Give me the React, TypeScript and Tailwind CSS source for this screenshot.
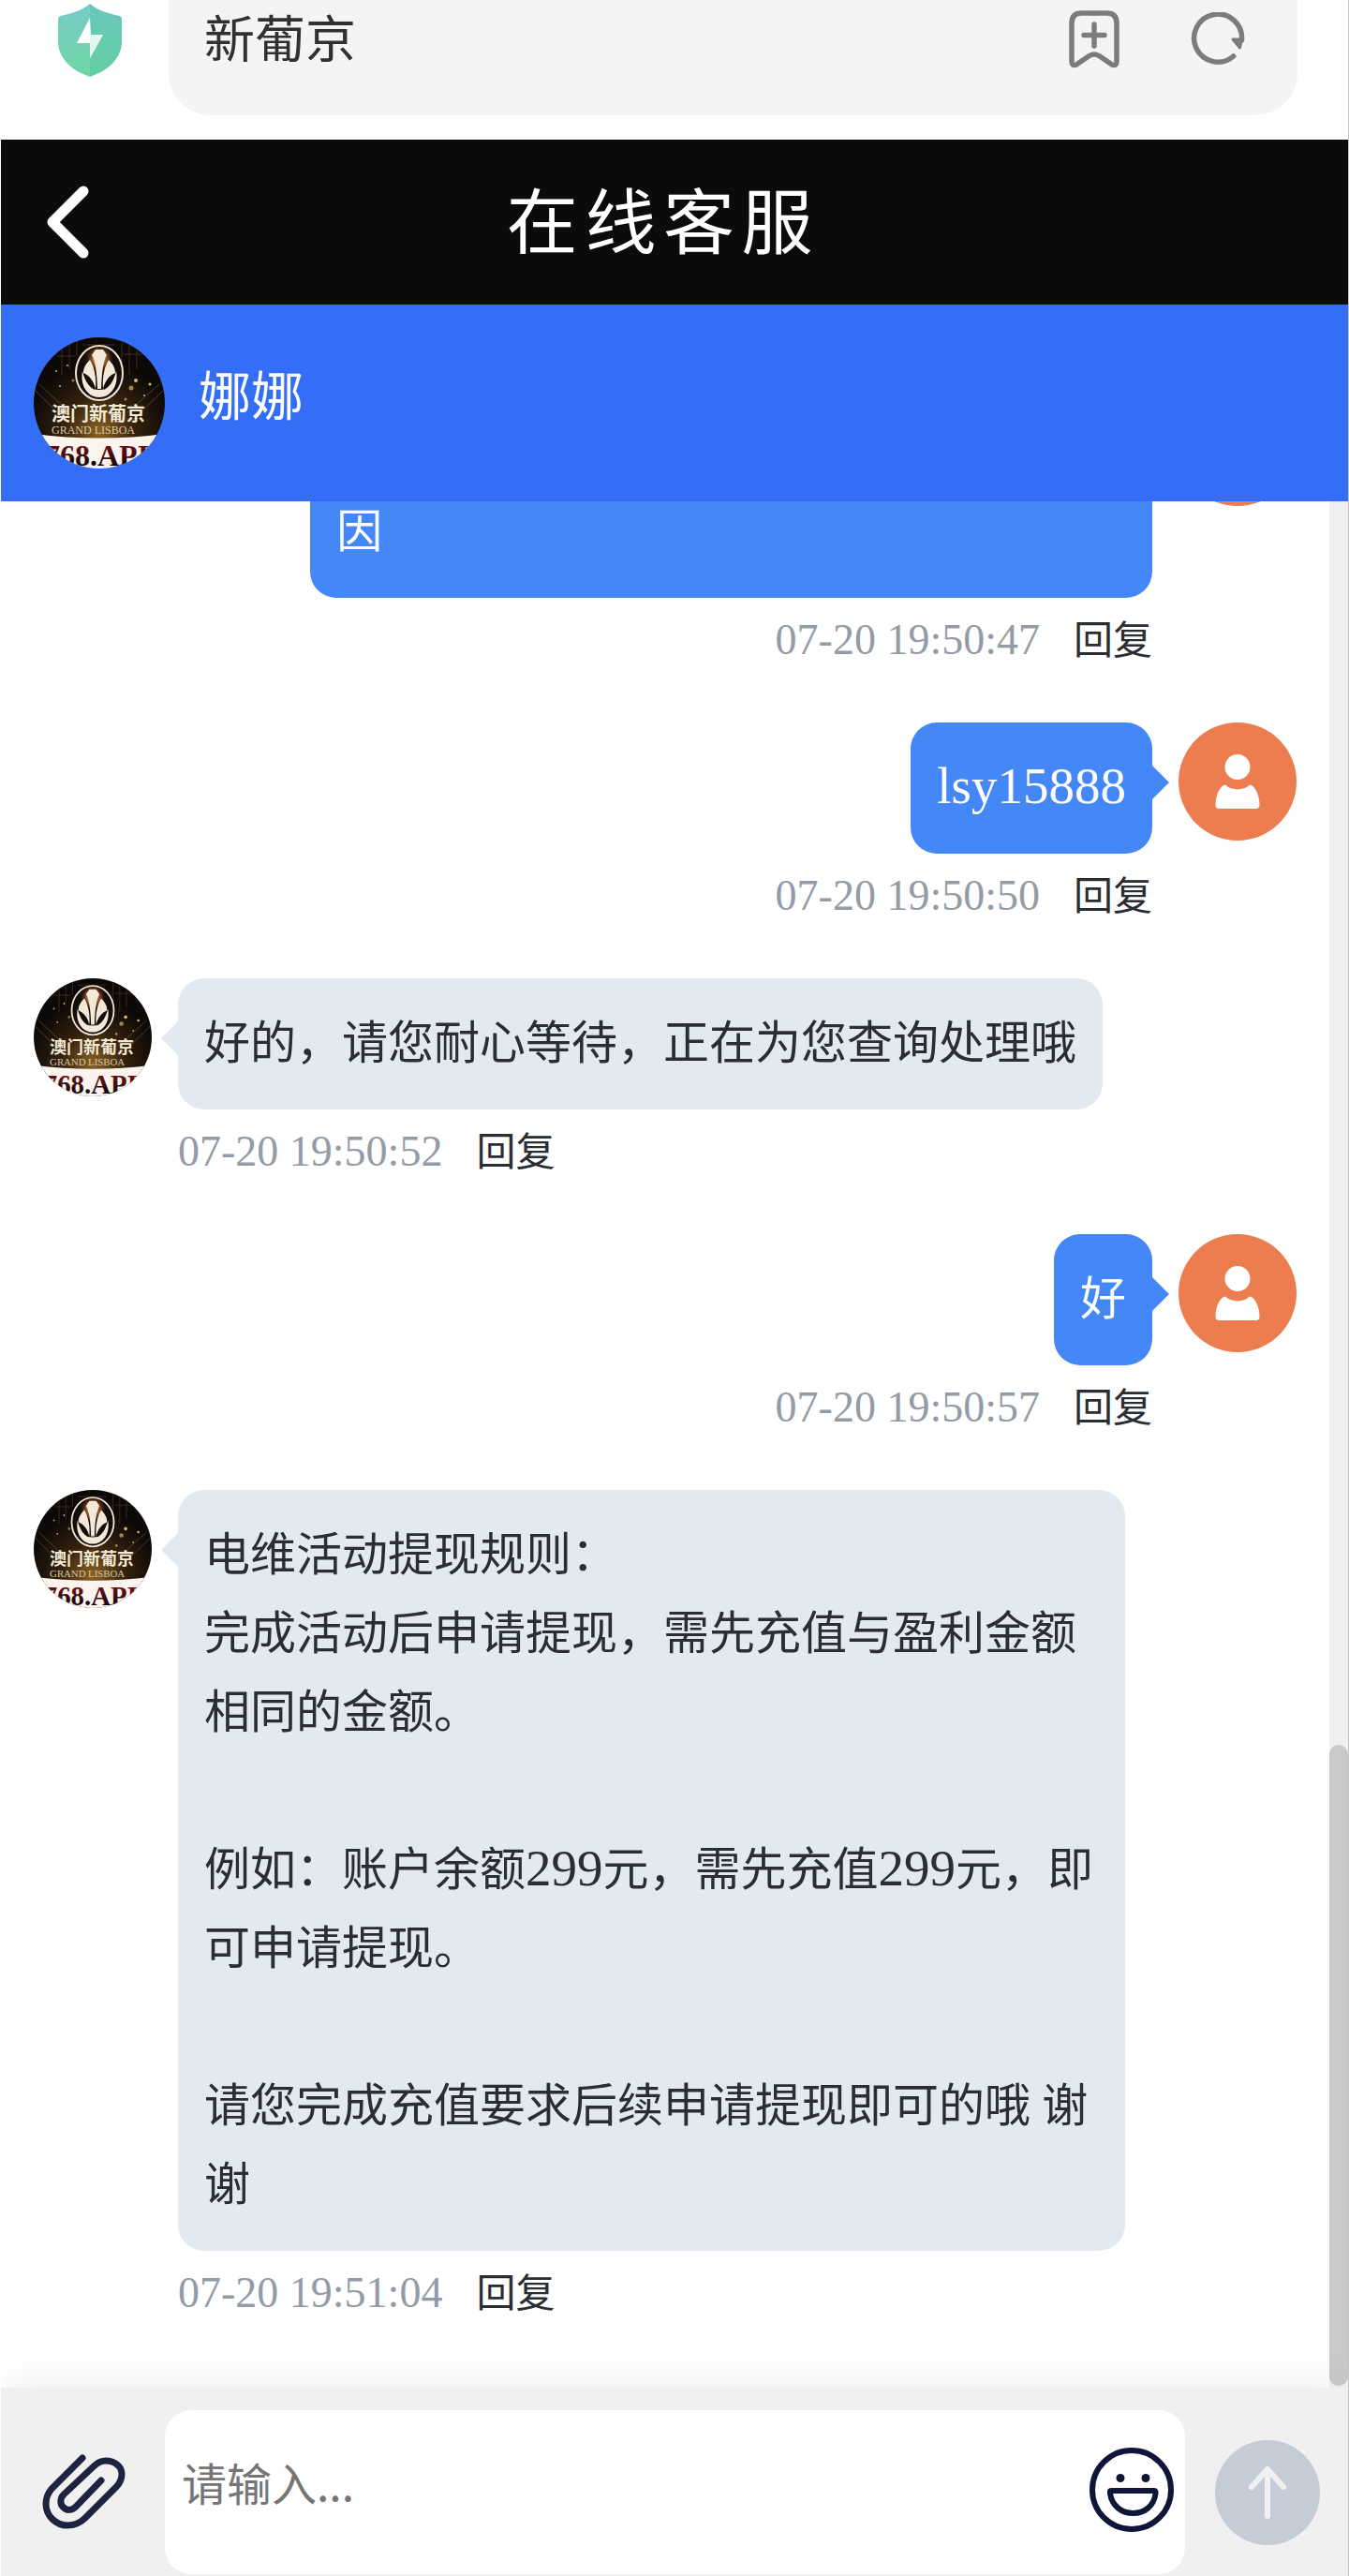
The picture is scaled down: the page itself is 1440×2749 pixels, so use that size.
interface Message {
  id: number;
  from: "agent" | "user";
  text: string;
  time: string;
  wide?: boolean;
}

const messages: Message[] = [
  { id: 1, from: "user", text: "\n因", time: "07-20 19:50:47", wide: true },
  { id: 2, from: "user", text: "lsy15888", time: "07-20 19:50:50" },
  { id: 3, from: "agent", text: "好的，请您耐心等待，正在为您查询处理哦", time: "07-20 19:50:52" },
  { id: 4, from: "user", text: "好", time: "07-20 19:50:57" },
  {
    id: 5,
    from: "agent",
    text: "电维活动提现规则：\n完成活动后申请提现，需先充值与盈利金额相同的金额。\n\n例如：账户余额299元，需先充值299元，即可申请提现。\n\n请您完成充值要求后续申请提现即可的哦 谢谢",
    time: "07-20 19:51:04",
  },
];

function ShieldIcon() {
  return (
    <svg viewBox="0 0 68 78" className="h-[78px] w-[68px]">
      <defs>
        <linearGradient id="shield" x1="0" y1="0" x2="0" y2="1">
          <stop offset="0" stopColor="#78cbc8" />
          <stop offset="1" stopColor="#6fd6a4" />
        </linearGradient>
      </defs>
      <path
        d="M34 0C42 7 55 11 66 13Q68 14 68 17V40C68 58 54 71 34 78C14 71 0 58 0 40V17Q0 14 2 13C13 11 26 7 34 0Z"
        fill="url(#shield)"
      />
      <path d="M34 0C42 7 55 11 66 13Q68 14 68 17V40C68 58 54 71 34 78Z" fill="#3bb894" opacity=".22" />
      <path d="M34 15L20 42H34V58L48 33H35Z" fill="#fff" />
      <path d="M34 42V58L48 33H35Z" fill="#e4f6f0" />
    </svg>
  );
}

function BookmarkIcon() {
  return (
    <svg viewBox="0 0 54 62" className="h-[62px] w-[54px]" fill="none" stroke="#7c7c7c" strokeWidth="5.5" strokeLinecap="round" strokeLinejoin="round">
      <path d="M3 14Q3 3 13 3H41Q51 3 51 14V54Q51 60 46 58L33 49Q27 45 21 49L8 58Q3 60 3 54Z" />
      <path d="M27 15V38M16 26.500H38" />
    </svg>
  );
}

function RefreshIcon() {
  return (
    <svg viewBox="0 0 58 58" className="h-[58px] w-[58px]" fill="none" stroke="#7c7c7c" strokeWidth="5.500" strokeLinecap="round" strokeLinejoin="round">
      <path d="M45.700 47A25.500 25.500 0 1 1 54.500 30" />
      <path d="M45 29H54.500L52.500 38Z" fill="#7c7c7c" strokeWidth="3" />
    </svg>
  );
}

function AgentAvatar({ className }: { className: string }) {
  return (
    <svg viewBox="0 0 140 140" className={`shrink-0 rounded-full ${className}`} role="img" aria-label="澳门新葡京">
      <defs>
        <radialGradient id="glow" cx=".5" cy=".72" r=".55">
          <stop offset="0" stopColor="#8a6224" />
          <stop offset=".5" stopColor="#34210d" />
          <stop offset="1" stopColor="#0d0908" />
        </radialGradient>
        <linearGradient id="plate" x1="0" y1="0" x2="0" y2="1">
          <stop offset="0.3" stopColor="#5d1014" />
          <stop offset="0.8" stopColor="#120808" />
        </linearGradient>
        <radialGradient id="spark">
          <stop offset="0" stopColor="#fff" />
          <stop offset=".4" stopColor="#e08a4c" stopOpacity=".8" />
          <stop offset="1" stopColor="#8a3c14" stopOpacity="0" />
        </radialGradient>
      </defs>
      <rect width="140" height="140" fill="url(#glow)" />
      <g stroke="#5b3a26" strokeWidth="1" opacity=".7">
        <path d="M30 8V40M38 4V34M46 3V20M94 5V28M102 8V40M110 14V34M24 20H44M96 18H120M52 8H86" />
      </g>
      <g stroke="#a88a5c" strokeWidth=".8" opacity=".5">
        <path d="M0 55L30 85M6 50L38 80M140 55L106 88M134 50L100 80" />
      </g>
      <g fill="#d9b765">
        <circle cx="109" cy="46" r="2" />
        <circle cx="104" cy="54" r="2.500" opacity=".7" />
        <circle cx="124" cy="50" r="1.500" />
        <circle cx="28" cy="52" r="1" />
        <circle cx="36" cy="30" r="1" />
        <circle cx="24" cy="36" r="1" />
        <circle cx="118" cy="62" r="1" />
        <circle cx="98" cy="66" r="1.500" opacity=".7" />
        <circle cx="42" cy="46" r="1.500" opacity=".6" />
      </g>
      <ellipse cx="70" cy="38" rx="25" ry="29" fill="#140d0a" stroke="#efe5d5" strokeWidth="2" />
      <circle cx="70" cy="23" r="15" fill="url(#spark)" />
      <g fill="#f4e9d8">
        <path d="M66 13H74L78 19Q73 26 72 55H68Q67 26 62 19Z" />
        <path d="M60 24C65 32 67 44 66 55C64 47 60 41 53 38C53 32 56 28 60 24Z" />
        <path d="M80 24C75 32 73 44 74 55C76 47 80 41 87 38C87 32 84 28 80 24Z" />
        <path d="M52 36C55 48 60 56 70 56C80 56 85 48 88 36C91 52 82 64 70 64C58 64 49 52 52 36Z" />
      </g>
      <path d="M57 42Q64 46 65 56Q58 53 57 42ZM83 42Q76 46 75 56Q82 53 83 42Z" fill="#140d0a" />
      <text x="19" y="89" fontSize="20" fontWeight="700" fill="#f3ead6" fontFamily="'Noto Sans CJK SC', sans-serif">
        澳门新葡京
      </text>
      <text x="19" y="103" fontSize="12" fill="#d8c8a8" fontFamily="'Liberation Serif', serif">
        GRAND LISBOA
      </text>
      <path d="M0 103Q70 112 140 103V140H0Z" fill="#fbf4ee" />
      <text x="12" y="137" fontSize="32" fontWeight="700" fill="url(#plate)" fontFamily="'Liberation Serif', serif">
        768.API
      </text>
    </svg>
  );
}

function UserAvatar() {
  return (
    <svg viewBox="0 0 126 126" className="size-[126px] shrink-0" role="img" aria-label="user">
      <circle cx="63" cy="63" r="63" fill="#eb7d4f" />
      <circle cx="63" cy="47.500" r="13.500" fill="#fff" />
      <path
        d="M50 66.500C46 66.500 39.500 75 39.500 88Q39.500 92 43.500 92H82.500Q86.500 92 86.500 88C86.500 75 80 66.500 76 66.500C69 73 57 73 50 66.500Z"
        fill="#fff"
      />
    </svg>
  );
}

// digits are set a little larger than the surrounding characters
function BubbleText({ text }: { text: string }) {
  return (
    <>
      {text.split(/([A-Za-z0-9]+)/).map((part, i) =>
        i % 2 === 1 ? (
          <span key={i} className="text-[55px] leading-none">
            {part}
          </span>
        ) : (
          part
        )
      )}
    </>
  );
}

function MessageRow({ message }: { message: Message }) {
  const isUser = message.from === "user";

  return (
    <li className={`flex shrink-0 items-start gap-7 ${isUser ? "flex-row-reverse" : ""}`}>
      {isUser ? <UserAvatar /> : <AgentAvatar className="size-[126px]" />}
      <div className={`flex flex-col ${isUser ? "items-end" : "items-start"} ${message.wide ? "w-2/3" : "max-w-3/4"}`}>
        <div
          className={`relative rounded-[28px] p-7 text-[49px] leading-[84px] whitespace-pre-wrap ${
            isUser ? "bg-[#4487f7] text-white" : "bg-[#e3e9f1] text-[#2a2d32]"
          } ${message.wide ? "w-full" : ""}`}
        >
          <BubbleText text={message.text} />
          <svg
            viewBox="0 0 18 36"
            className={`absolute top-[46px] h-9 w-[18px] ${isUser ? "left-full" : "right-full"}`}
          >
            <path d={isUser ? "M0 0L18 18L0 36Z" : "M18 0L0 18L18 36Z"} fill={isUser ? "#4487f7" : "#e3e9f1"} />
          </svg>
        </div>
        <div className="mt-3.5 flex items-baseline gap-9 leading-[61px]">
          <time className="text-[46px] text-[#939ca6]">{message.time}</time>
          <button type="button" className="text-[42px] text-[#2a2d32]">
            回复
          </button>
        </div>
      </div>
    </li>
  );
}

export default function App() {
  return (
    <div className="flex h-screen flex-col overflow-hidden border-r border-l border-r-[#c4c4c4] border-l-white bg-white font-['Liberation_Serif','Noto_Sans_CJK_SC',serif]">
      <div className="flex h-[149px] shrink-0 items-start pr-[54px] pl-[61px]">
        <div className="mr-[50px] pt-1">
          <ShieldIcon />
        </div>
        <div className="flex h-[123px] flex-1 items-center rounded-b-[45px] bg-[#f4f4f4] pr-14 pb-10 pl-[38px]">
          <span className="flex-1 pt-1 text-[54px] leading-[60px] text-[#303030]">新葡京</span>
          <button type="button" aria-label="添加书签" className="mr-[76px]">
            <BookmarkIcon />
          </button>
          <button type="button" aria-label="刷新">
            <RefreshIcon />
          </button>
        </div>
      </div>

      <header className="flex h-44 shrink-0 items-center bg-[#0b0b0b] pr-[118px] pl-12 text-white">
        <button type="button" aria-label="返回">
          <svg viewBox="0 0 46 78" className="h-[78px] w-[46px]" fill="none" stroke="#fff" strokeWidth="11" strokeLinecap="round" strokeLinejoin="round">
            <path d="M40 6L7 39L40 72" />
          </svg>
        </button>
        <h1 className="flex-1 pt-1 text-center text-[76px] leading-[100px] tracking-widest">在线客服</h1>
      </header>

      <div className="flex h-[210px] shrink-0 items-center gap-9 bg-[#346ef7] px-[35px] text-white">
        <AgentAvatar className="size-[140px]" />
        <h2 className="pb-3 text-[56px] leading-[72px]">娜娜</h2>
      </div>

      <main className="flex min-h-0 flex-1">
        <ul className="flex min-w-0 flex-1 flex-col justify-end gap-14 overflow-hidden px-[35px] pb-[69px]">
          {messages.map((message) => (
            <MessageRow key={message.id} message={message} />
          ))}
        </ul>
        <div className="flex w-5 flex-col justify-end bg-[#f0f0f0] pb-0.5">
          <div className="h-[34%] rounded-full bg-[#c9c9c9]" />
        </div>
      </main>

      <footer className="relative flex shrink-0 items-center bg-[#f0f0f0] pt-6 pr-[30px] pb-0.5 pl-[39px] shadow-[0_-8px_40px_-4px_rgba(0,0,0,0.07)]">
        <button type="button" aria-label="附件" className="mr-9">
          <svg viewBox="0 0 100 96" className="h-24 w-[100px]" fill="none" stroke="#1d2340" strokeWidth="7" strokeLinecap="round" strokeLinejoin="round">
            <path d="M48 11L15 44C10 50 9 54 9 60C9 73 20 83 32 83C40 83 46 80 51 75L84 42C88 38 90 33 90 28C90 20 82 14 73 14C68 14 64 16 60 20L28 50C24 54 24 60 27 63C31 68 37 67 41 63L68 35" />
          </svg>
        </button>
        <div className="flex h-[175px] flex-1 items-center rounded-[28px] bg-white pr-3 pl-[18px]">
          <input
            type="text"
            aria-label="请输入"
            placeholder="请输入..."
            className="min-w-0 flex-1 pb-6 font-['Noto_Sans_CJK_SC',sans-serif] text-[48px] leading-[84px] text-[#2a2d32] outline-none placeholder:text-[#757575]"
          />
          <button type="button" aria-label="表情" className="pb-1.5">
            <svg viewBox="0 0 90 90" className="size-[90px]" fill="none" stroke="#10163a" strokeWidth="6" strokeLinejoin="round">
              <circle cx="45" cy="45" r="42" />
              <path d="M23 46H69Q71 46 70.500 49C69 62 59 70 46.500 70C34 70 24 62 22 49Q21.500 46 23 46Z" />
              <circle cx="33" cy="32.500" r="4.500" fill="#10163a" stroke="none" />
              <circle cx="60" cy="32.500" r="4.500" fill="#10163a" stroke="none" />
            </svg>
          </button>
        </div>
        <button type="button" aria-label="发送" className="ml-8 flex size-28 items-center justify-center rounded-full bg-[#c6ccd5]">
          <svg viewBox="0 0 42 58" className="h-[58px] w-[42px]" fill="none" stroke="#f0f0f0" strokeWidth="6" strokeLinecap="round" strokeLinejoin="round">
            <path d="M21 54V5M4 23L21 4L38 23" />
          </svg>
        </button>
      </footer>
    </div>
  );
}
